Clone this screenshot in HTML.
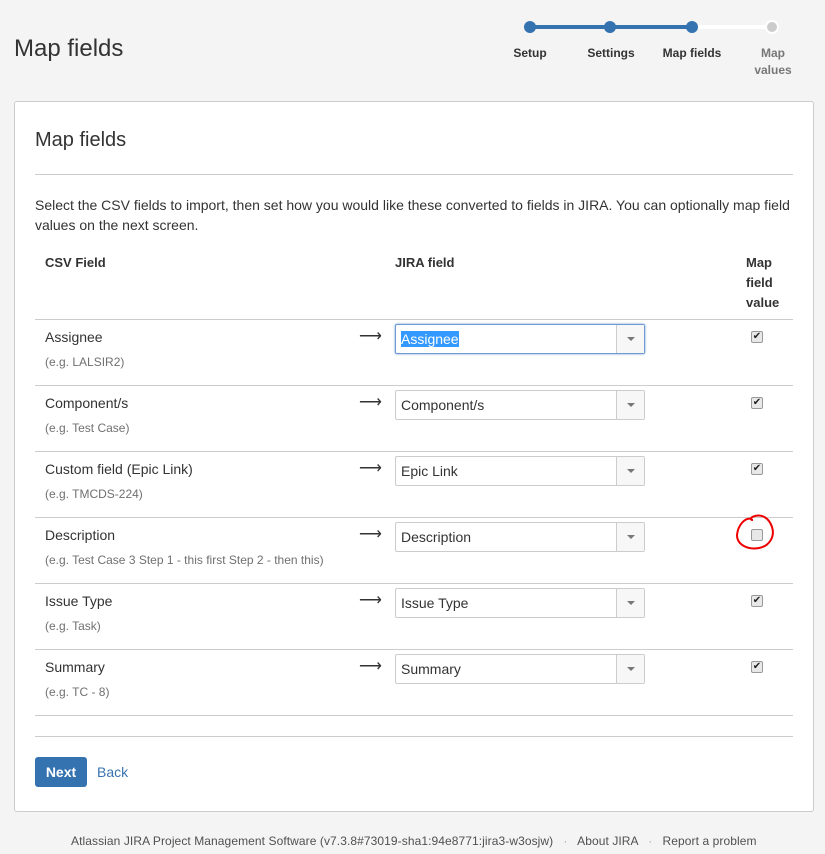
<!DOCTYPE html>
<html><head><meta charset="utf-8"><style>
*{box-sizing:border-box;margin:0;padding:0}
body{width:825px;height:854px;background:#f4f4f4;font-family:"Liberation Sans",Arial,sans-serif;color:#333;position:relative;overflow:hidden}
.a{position:absolute}
.panel{left:14px;top:101px;width:800px;height:711px;background:#fff;border:1px solid #ccc;border-radius:3px}
.hr{height:1px;background:#ccc;left:35px;width:758px}
.lbl{font-size:14px;color:#333}
.sub{font-size:12px;color:#707070}
.sel{width:250px;height:30px;border:1px solid #ccc;border-radius:2px;background:#fff;font-size:14px;padding-left:5px;line-height:28px}
.sel .dd{position:absolute;right:0;top:0;width:28px;height:28px;border-left:1px solid #ccc;background:#f7f7f7}
.sel .dd:after{content:"";position:absolute;left:10px;top:12px;border-left:4px solid transparent;border-right:4px solid transparent;border-top:4px solid #777}
.cb{width:12px;height:12px;border:1px solid #999;border-radius:2px;background:#e8e8e8;font-size:10px;line-height:10px;text-align:center;color:#222}
.dot{width:12px;height:12px;border-radius:50%;background:#3572b0;top:21px}
.step{font-size:12px;font-weight:bold;color:#333;text-align:center;width:80px;top:45px;line-height:17px}
.arr{font-size:16px;color:#333}
</style></head><body>
<div class="a" style="left:14px;top:35px;font-size:24px;color:#333">Map fields</div>
<div class="a" style="left:530px;top:25px;width:162px;height:4px;background:#3572b0"></div>
<div class="a" style="left:692px;top:25px;width:80px;height:4px;background:#fff"></div>
<div class="a dot" style="left:524px"></div>
<div class="a dot" style="left:604px"></div>
<div class="a dot" style="left:686px"></div>
<div class="a dot" style="left:766px;background:#ccc;border:2px solid #fff;width:14px;height:14px;top:20px;left:765px"></div>
<div class="a step" style="left:490px">Setup</div>
<div class="a step" style="left:571px">Settings</div>
<div class="a step" style="left:652px">Map fields</div>
<div class="a step" style="left:733px;color:#777">Map<br>values</div>
<div class="a panel"></div>
<div class="a" style="left:35px;top:129px;font-size:20px;color:#333">Map fields</div>
<div class="a hr" style="top:174px"></div>
<div class="a" style="left:35px;top:195px;width:760px;font-size:14px;line-height:20px">Select the CSV fields to import, then set how you would like these converted to fields in JIRA. You can optionally map field values on the next screen.</div>
<div class="a" style="left:45px;top:255px;font-size:13px;font-weight:bold">CSV Field</div>
<div class="a" style="left:395px;top:255px;font-size:13px;font-weight:bold">JIRA field</div>
<div class="a" style="left:746px;top:253px;font-size:13px;font-weight:bold;line-height:20px">Map<br>field<br>value</div>

<div class="a hr" style="top:319px"></div>
<div class="a lbl" style="left:45px;top:329px">Assignee</div>
<div class="a sub" style="left:45px;top:355px">(e.g. LALSIR2)</div>
<div class="a arr" style="left:359px;top:326px">⟶</div>
<div class="a sel" style="left:395px;top:324px;border-color:#6d9bd1;box-shadow:0 0 2px #6d9bd1"><span style="background:#3399ff;color:#fff">Assignee</span><div class="dd"></div></div>
<div class="a cb" style="left:751px;top:331px">✔</div>

<div class="a hr" style="top:385px"></div>
<div class="a lbl" style="left:45px;top:395px">Component/s</div>
<div class="a sub" style="left:45px;top:421px">(e.g. Test Case)</div>
<div class="a arr" style="left:359px;top:392px">⟶</div>
<div class="a sel" style="left:395px;top:390px">Component/s<div class="dd"></div></div>
<div class="a cb" style="left:751px;top:397px">✔</div>

<div class="a hr" style="top:451px"></div>
<div class="a lbl" style="left:45px;top:461px">Custom field (Epic Link)</div>
<div class="a sub" style="left:45px;top:487px">(e.g. TMCDS-224)</div>
<div class="a arr" style="left:359px;top:458px">⟶</div>
<div class="a sel" style="left:395px;top:456px">Epic Link<div class="dd"></div></div>
<div class="a cb" style="left:751px;top:463px">✔</div>

<div class="a hr" style="top:517px"></div>
<div class="a lbl" style="left:45px;top:527px">Description</div>
<div class="a sub" style="left:45px;top:553px">(e.g. Test Case 3 Step 1 - this first Step 2 - then this)</div>
<div class="a arr" style="left:359px;top:524px">⟶</div>
<div class="a sel" style="left:395px;top:522px">Description<div class="dd"></div></div>
<div class="a cb" style="left:751px;top:529px"></div>
<svg class="a" style="left:730px;top:510px" width="50" height="45"><path d="M22 9 C15 7 8 15 7 25 C7 35 18 40 29 38 C40 36 45 26 42 17 C39 8 32 4 25 6 C21 7 19 10 23 10" fill="none" stroke="#e00" stroke-width="2"/></svg>

<div class="a hr" style="top:583px"></div>
<div class="a lbl" style="left:45px;top:593px">Issue Type</div>
<div class="a sub" style="left:45px;top:619px">(e.g. Task)</div>
<div class="a arr" style="left:359px;top:590px">⟶</div>
<div class="a sel" style="left:395px;top:588px">Issue Type<div class="dd"></div></div>
<div class="a cb" style="left:751px;top:595px">✔</div>

<div class="a hr" style="top:649px"></div>
<div class="a lbl" style="left:45px;top:659px">Summary</div>
<div class="a sub" style="left:45px;top:685px">(e.g. TC - 8)</div>
<div class="a arr" style="left:359px;top:656px">⟶</div>
<div class="a sel" style="left:395px;top:654px">Summary<div class="dd"></div></div>
<div class="a cb" style="left:751px;top:661px">✔</div>

<div class="a hr" style="top:715px"></div>
<div class="a hr" style="top:736px"></div>
<div class="a" style="left:35px;top:757px;width:52px;height:30px;background:#3572b0;border-radius:3px;color:#fff;font-size:14px;font-weight:bold;text-align:center;line-height:30px">Next</div>
<div class="a" style="left:97px;top:764px;font-size:14px;color:#3b73af">Back</div>
<div class="a" style="left:71px;top:834px;font-size:12px;color:#505050;white-space:nowrap;letter-spacing:0.08px">Atlassian JIRA Project Management Software (v7.3.8#73019-sha1:94e8771:jira3-w3osjw) &nbsp; <span style="color:#aaa">·</span> &nbsp; About JIRA &nbsp; <span style="color:#aaa">·</span> &nbsp; Report a problem</div>
</body></html>
